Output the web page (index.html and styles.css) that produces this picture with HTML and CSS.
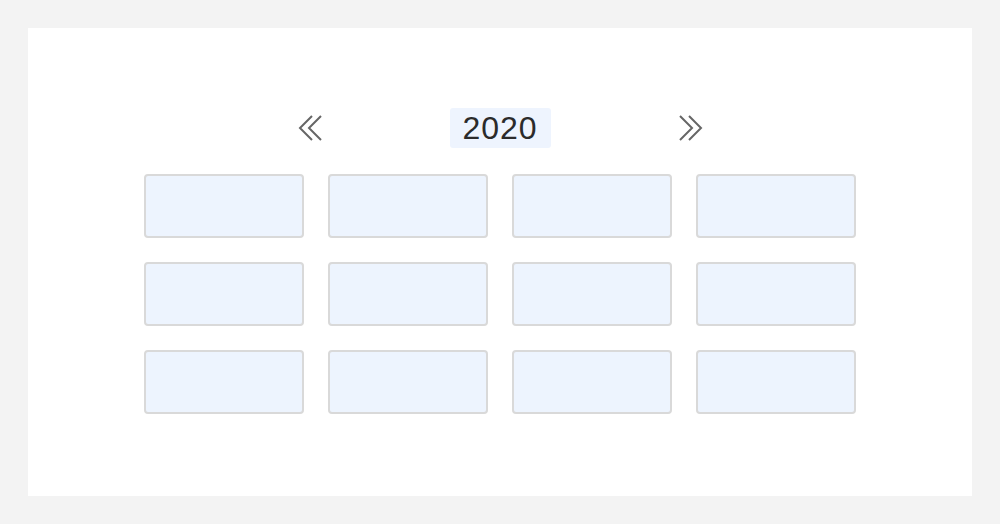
FILE: index.html
```html
<!DOCTYPE html>
<html>
<head>
<meta charset="utf-8">
<link rel="stylesheet" href="styles.css">
</head>
<body>
<div class="panel">
  <div class="header">
    <svg class="arrow" width="24" height="26" viewBox="0 0 24 26">
      <polyline points="14,1 2,13 14,25" />
      <polyline points="23,1 11,13 23,25" />
    </svg>
    <div class="year">2020</div>
    <svg class="arrow" width="24" height="26" viewBox="0 0 24 26">
      <polyline points="1,1 13,13 1,25" />
      <polyline points="10,1 22,13 10,25" />
    </svg>
  </div>
  <div class="grid">
    <div class="cell"></div><div class="cell"></div><div class="cell"></div><div class="cell"></div>
    <div class="cell"></div><div class="cell"></div><div class="cell"></div><div class="cell"></div>
    <div class="cell"></div><div class="cell"></div><div class="cell"></div><div class="cell"></div>
  </div>
</div>
</body>
</html>
```
FILE: styles.css
```css
html, body {
  margin: 0;
  padding: 0;
}
body {
  background: #f3f3f3;
  padding: 28px;
  font-family: "Liberation Sans", Arial, sans-serif;
  box-sizing: border-box;
  width: 1000px;
  height: 524px;
}
.panel {
  background: #ffffff;
  height: 468px;
  box-sizing: border-box;
  padding-top: 80px;
  display: flex;
  flex-direction: column;
  align-items: center;
}
.header {
  display: flex;
  align-items: center;
  gap: 128px;
  height: 40px;
}
.arrow {
  display: block;
}
.arrow polyline {
  fill: none;
  stroke: #666666;
  stroke-width: 2;
}
.year {
  width: 101px;
  height: 40px;
  background: #eef4fe;
  border-radius: 3px;
  color: #2b2b2b;
  font-size: 32px;
  letter-spacing: 1px;
  line-height: 40px;
  text-align: center;
}
.grid {
  margin-top: 26px;
  display: grid;
  grid-template-columns: repeat(4, 160px);
  grid-auto-rows: 64px;
  gap: 24px;
}
.cell {
  box-sizing: border-box;
  background: #edf4fe;
  border: 2px solid #d9d9d9;
  border-radius: 4px;
}
```
